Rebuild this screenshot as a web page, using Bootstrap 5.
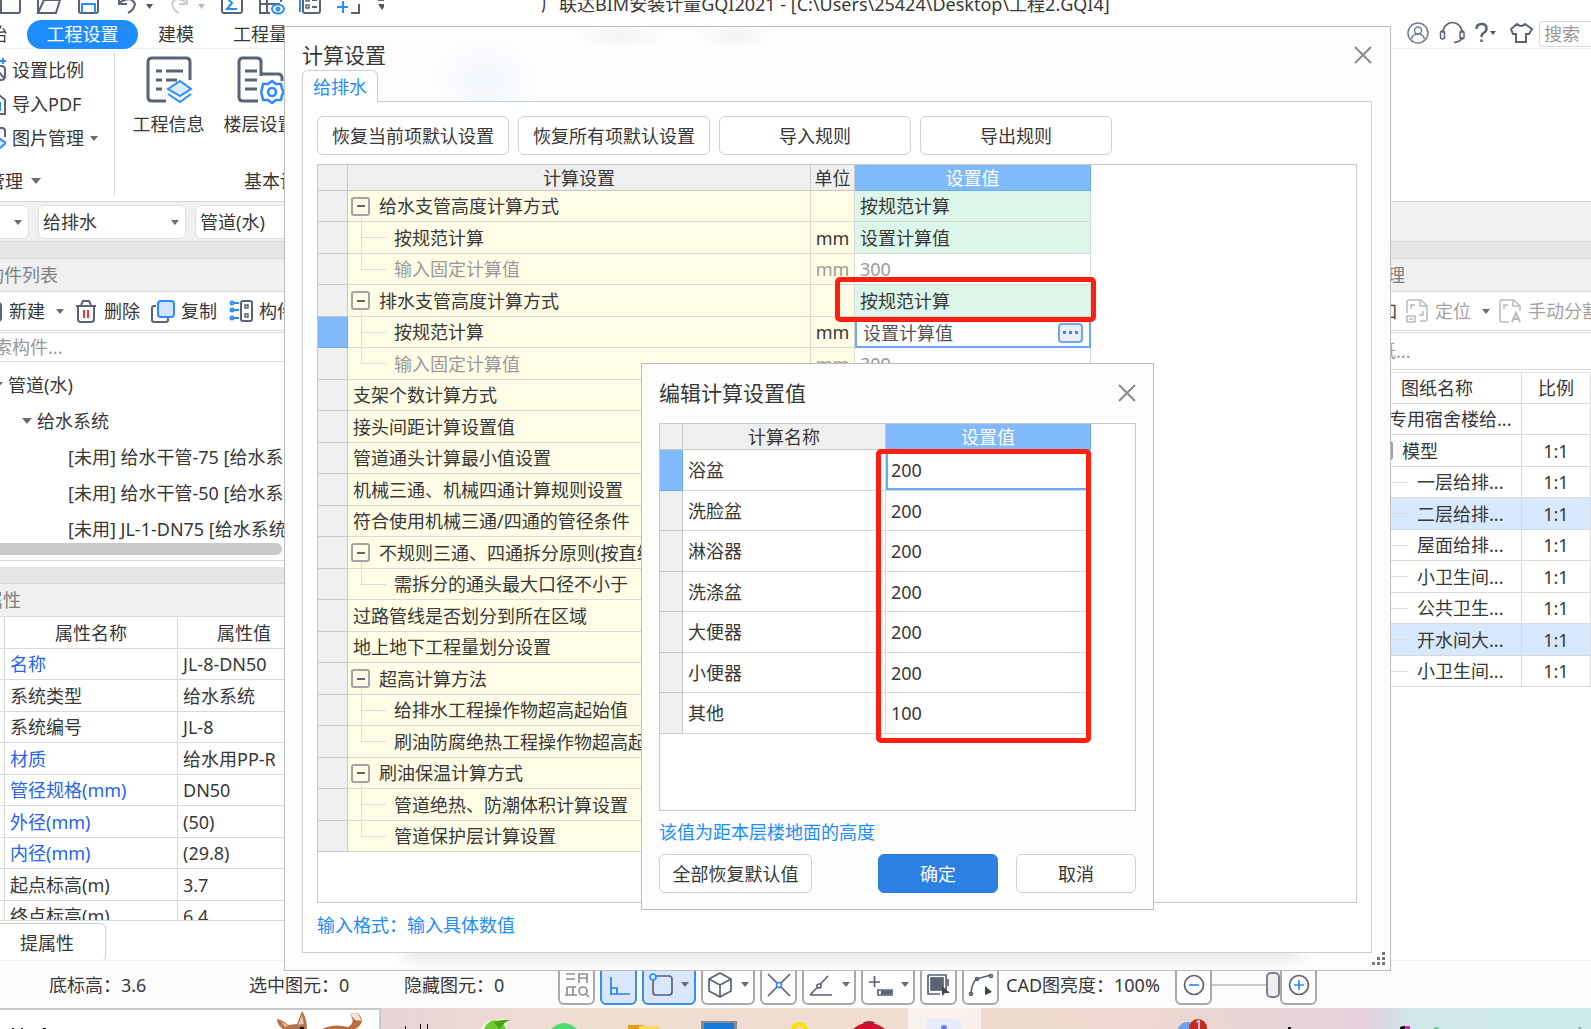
<!DOCTYPE html>
<html lang="zh-CN">
<head>
<meta charset="utf-8">
<meta name="viewport" content="width=device-width, initial-scale=1">
<title>广联达BIM安装计量GQI2021</title>
<link href="https://cdn.jsdelivr.net/npm/bootstrap@5.3.0/dist/css/bootstrap.min.css" rel="stylesheet">
<style>
:root{--ink:#383838;--rule:#d9d9d9;--accent:#1e8cff;--head:#f0f0f0}
body{font-family:"Noto Sans","Noto Sans CJK SC",sans-serif;font-size:18px;line-height:24px;color:var(--ink);background:#fff;overflow:hidden;height:100vh}
svg{display:block;flex:none;fill:none;stroke:#5a6275;stroke-width:2}
table{border-collapse:separate;border-spacing:0;table-layout:fixed}
button{color:inherit}
.shell{margin:-12px 0 0 -32px;height:calc(100vh + 12px);white-space:nowrap}
.shell>*{flex-shrink:0}
.shell>main{flex:1 1 0;min-height:0}
.caret{width:0;height:0;border:5px solid transparent;border-top:6px solid #6d6d6d;border-bottom:0;flex:none}
.caret-s{border-width:4px;border-top-width:5px;border-bottom:0}
.plain{background:none;border:0;padding:0;white-space:nowrap}
/* title and tabs */
.titlebar{height:32px;padding-left:32px}
.apptitle{padding-left:157px}
.tabs{height:29px;border-bottom:1px solid #eee}
.tabs a{color:var(--ink);text-decoration:none}
.tabs .on{background:var(--accent);color:#fff;border-radius:15px;width:111px;height:29px;text-align:center;line-height:28px}
.tabs .find{width:52px;height:26px;border:1px solid var(--rule);border-right:0;border-radius:4px 0 0 4px;padding:0 4px;outline:0;color:#999}
.find::placeholder,.seek::placeholder{color:#999;opacity:1}
/* ribbon */
.ribbon{height:152px}
.smalls{width:147px;border-right:1px solid var(--rule);margin:4px 0 6px}
.smalls .tool{height:34px;gap:6px;padding-left:16px}
.bigs .tool{width:91px}
.strip{height:41px;background:#f1f1f1;border-top:1px solid var(--rule);border-bottom:1px solid var(--rule);gap:9px;padding:3px 0}
.strip .form-select{width:148px;height:34px;padding:0 4px;font-size:18px;line-height:24px;border:1px solid #e0e0e0;border-radius:6px;color:var(--ink);background-image:linear-gradient(#0000,#0000)}
.pick{position:relative}
.pick .caret{position:absolute;right:7px;top:15px}
.band{height:16px;background:#e6e6e6}
.panelhead{height:34px;background:var(--head);border-top:1px solid var(--rule);border-bottom:1px solid var(--rule);color:#808080}
.bar{height:41px;border-bottom:3px double var(--rule)}
.bar .dim{color:#a3a3a3;gap:7px;margin-left:9px}
.bar .dim svg{stroke:#bbb;stroke-width:1.5}
.seek{height:29px;border:0;border-bottom:1px solid var(--rule);outline:0;padding:0 0 0 8px}
/* left dock */
.dock-l{width:372px}
.tree{height:181px;padding-top:5px;overflow:hidden}
.tree li{height:36px;display:flex;align-items:center;gap:5px}
.thumb{height:12px;width:314px;background:#c9c9c9;border-radius:6px;margin-bottom:5px;flex:none}
.gapline{height:7px;border-top:1px solid var(--rule);flex:none}
.clip{overflow:hidden;min-height:0}
.props td,.props th,.sheets td,.sheets th{border-right:1px solid var(--rule);border-bottom:1px solid var(--rule);padding:0 5px;font-weight:400;height:31px}
.props thead th,.props tr:nth-child(even) td{height:32px}
.props th,.sheets th{text-align:center}
.props .key{color:#2563f5}
.dockfoot{height:40px;border-top:1px solid var(--rule);padding-top:2px;flex:none}
.btn-line{border:1px solid #cfcfcf;border-radius:6px;background:#fff;padding:0;height:39px;white-space:nowrap;font-size:18px;line-height:24px;color:var(--ink)}
.btn-line:hover{background:#f6f9ff}
/* right dock */
.dock-r{width:271px}
.sheets tr>:nth-child(2){text-align:center;padding:0}
.sheets tr:nth-child(even) td{height:32px}
.sheets td.kid{padding-left:97px;background:linear-gradient(#ddd,#ddd) 71px 50%/17px 1px no-repeat}
.sheets .pick-row td{background-color:#d6e9ff}
/* dialogs */
.dlg{position:absolute;background-color:#fdfdfd;border:1px solid #bcbcbc}
.dlg h2{font-size:21px;line-height:28px;margin:0;font-weight:400}
.dlg-main{left:284px;right:200px;top:26px;bottom:58px;padding:0 18px 17px 17px;
 background-image:radial-gradient(ellipse 56px 44px at 200px 52px,#f1f5fd,#0000),radial-gradient(ellipse 50px 14px at 335px 8px,#f3f3f3,#0000),radial-gradient(ellipse 40px 14px at 450px 8px,#f3f3f3,#0000),linear-gradient(#fdfdfd00,#fdfdfd),linear-gradient(90deg,#0000 108px,#e9e9e9 134px,#e9e9e9 1000px,#0000 1028px);
 background-size:auto,auto,auto,100% 18px,100% 18px;background-position:0 0,0 0,0 0,0 100%,0 100%;background-repeat:no-repeat}
.dlg-main header{height:43px;padding-top:12px}
.dlg-main header svg,.dlg-sub header svg{stroke:#8b8b8b}
.leaf{height:32px;width:76px;border:1px solid #c9d0d6;border-bottom:0;border-radius:6px 6px 0 0;background:#fff;color:var(--accent);margin-bottom:-1px;position:relative;text-align:center;line-height:32px;padding:0}
.sheetbox{border:1px solid #c9d0d6;background:#fff;padding:14px 14px 15px;min-height:0}
.gridbox{border:1px solid #c8c8c8;background:#fff;min-height:0}
.w192{width:192px}
.calc{width:773px}
.calc th,.calc td{border-right:1px solid var(--rule);border-bottom:1px solid var(--rule);padding:0 5px;height:31px;line-height:24px;font-weight:400;white-space:nowrap;overflow:hidden}
.calc th{background:#efefef;height:26px;text-align:center;padding:0;border-color:#c8c8c8}
.calc tbody tr:nth-child(even) td{height:32px}
.calc tbody td:nth-child(1),.vals tbody td:nth-child(1){background:#efefef;border-color:#c8c8c8}
.calc tbody td:nth-child(2),.calc tbody td:nth-child(3){background-color:#fffde5}
.calc tbody td:nth-child(3){text-align:center;padding:0}
.calc .mint{background:#ddf6ea}
.calc th.hot,.vals th.hot,.calc tbody td.hot,.vals tbody td.hot{background:#80bafa;border-color:#6aaaf0;color:#fff}
.calc .off{color:#9a9a9a}
.calc td.sub,.calc td.end{padding-left:46px;background:linear-gradient(#dedede,#dedede) 13px 0/1px 100% no-repeat,linear-gradient(#dedede,#dedede) 13px 50%/25px 1px no-repeat}
.calc td.end{background-size:1px 50%,25px 1px}
.calc td.top{padding-left:3px;background:linear-gradient(#dedede,#dedede) 13px 100%/1px 6px no-repeat}
.node{display:flex;align-items:center;gap:9px}
.fold{width:19px;height:19px;border:2px solid #a3a3a3;border-radius:3px;background:none;padding:0;flex:none;display:flex;align-items:center;justify-content:center}
.fold::after{content:"";width:8px;height:2px;background:#666}
.calc td.anchor{position:relative;overflow:visible}
.mark-red{position:absolute;border:5px solid #ff1f10;border-radius:5px;z-index:2;pointer-events:none}
.mark-a{inset:-8px -6px -6px -20px}
.mark-b{top:25px;right:0;bottom:-9px;width:215px}
.calc td.edit{padding:0;border:0;height:31px}
.editor{height:31px;border:2px solid #6aaaee;padding:0 6px}
.editor input{border:0;outline:0;padding:0;width:100%;min-width:0;color:#555;background:none}
.more{width:25px;height:20px;border:2px solid #6aaaee;border-radius:4px;background:#eceef8;padding:0;gap:3px;flex:none}
.more i{width:3px;height:3px;background:#2b8cff}
.hint{color:var(--accent)}
.dlg-sub{left:641px;top:363px;width:513px;padding:0 17px 16px}
.dlg-sub header{height:59px;padding-bottom:2px}
.dlg-sub .gridbox{height:388px}
.vals{width:431px}
.vals th,.vals td{border-right:1px solid var(--rule);border-bottom:1px solid var(--rule);padding:0 5px;height:41px;font-weight:400}
.vals th{height:26px;background:#efefef;text-align:center;border-color:#c8c8c8}
.vals tr:nth-child(even) td{height:40px}
.vals tbody tr:first-child td:last-child{box-shadow:inset 0 0 0 2px #6aaaee}
.btn-ok{background:#2c80e2;border-color:#2c80e2;color:#fff}
.w120{width:120px}.w153{width:153px}
.grip{position:absolute;right:4px;bottom:4px}
/* status and task bar */
.status{height:48px;background:#fcfcfc;padding-left:81px;border-top:1px solid #f0f0f0}
.status svg{stroke-width:1.7}
.status .btns{gap:5px}
.tbtn{height:40px;width:37px;border:2px solid #a9a9a9;border-radius:6px;background:#fff;padding:0;display:flex;align-items:center;justify-content:center;gap:8px}
.tbtn.wide{width:54px}
.tbtn.act{background:#d8e7fb;border-color:#3a8df0}
.range{appearance:none;width:68px;height:26px;background:linear-gradient(#c9c9c9,#c9c9c9) 0 50%/100% 2px no-repeat;margin:0}
.range::-webkit-slider-thumb{appearance:none;width:14px;height:26px;border:2px solid #7a7f8c;border-radius:5px;background:#f0f0f0}
.task{height:21px;background:linear-gradient(90deg,#e8d2d8 400px,#efdcd2 560px,#f0dccf 900px,#eed8d0 1180px,#e5d2da 1360px,#e3d0dc 1400px,#cfe6ea 1440px,#cbeaec)}
.taskfind{width:413px;background:#fff;border:2px solid #c8c8c8;border-left:0;border-bottom:0}
</style>
</head>
<body>
<div class="shell d-flex flex-column">
  <div class="titlebar d-flex align-items-center">
    <svg width="384" height="24" viewBox="0 0 384 24">
      <path d="M1 3v18h17q2 0 2-2V3"/>
      <path d="M38 21l6-13h16l-4 13zM38 21V5h12"/>
      <path d="M79 3v16q0 2 2 2h15q2 0 2-2V3"/><path d="M82 21v-9h13v9" stroke="#2b8cff"/>
      <path d="M119 4v8h8M119 11q12-8 16 1-1 6-7 9"/><path d="M146 12h7l-3.500 5z" fill="#555" stroke="none"/>
      <path d="M187 4v8h-8M187 11q-12-8-15 1 1 6 7 9" stroke="#ccc"/><path d="M198 12h7l-3.500 5z" fill="#bbb" stroke="none"/>
      <path d="M222 3v16q0 2 2 2h16q2 0 2-2V3"/><path d="M236 6h-9l5 5-5 6h10" stroke="#2b8cff"/>
      <path d="M281 10V3M260 3v18h10M260 12h20M267 3v18"/><ellipse cx="278" cy="17" rx="6" ry="4.500" stroke="#2b8cff"/><circle cx="278" cy="17" r="1.500" stroke="#2b8cff"/>
      <path d="M300 3v17" stroke="#2b8cff"/><path d="M303 3v16q0 2 2 2h13q2 0 2-2V3M312 8h5M312 15h5"/><path d="M306 6h3v3h-3zM306 13h3v3h-3z" stroke-width="1.500"/>
      <path d="M343 9v12M337 15h11" stroke="#2b8cff"/><path d="M351 21h8v-9M338 3v4"/>
      <path d="M378 8h8" /><path d="M378 12h8l-4 6z" fill="#555" stroke="none"/>
    </svg>
    <div class="apptitle">广联达BIM安装计量GQI2021 - [C:\Users\25424\Desktop\工程2.GQI4]</div>
  </div>
  <nav class="tabs d-flex align-items-center">
    <a href="#" style="margin-left:3px">开始</a>
    <a href="#" class="on" style="margin-left:20px">工程设置</a>
    <a href="#" style="margin-left:20px">建模</a>
    <a href="#" style="margin-left:39px">工程量</a>
    <div class="ms-auto d-flex align-items-center">
      <svg width="132" height="26" viewBox="0 0 132 26">
        <g stroke="#747c8e" stroke-width="1.500"><circle cx="11" cy="12" r="10"/><circle cx="11" cy="9.500" r="3.500"/><path d="M4.500 18q1-5 6.500-5t6.500 5"/></g>
        <path d="M36 12v-1a9.500 9.500 0 0 1 19 0v1M55 16q-1 5-8 5.500" stroke-width="1.700"/><rect x="33.500" y="10" width="4" height="8" rx="2" stroke-width="1.500"/><rect x="53" y="10" width="4" height="8" rx="2" stroke-width="1.500"/>
        <path d="M69.500 8q0-5 5-5t5 4.500q0 3-3 4.500-2 1-2 4M74.500 18.500v2.500" stroke-width="2.500"/><path d="M83 10h6l-3 4z" fill="#555" stroke="none"/>
        <path d="M110 3q4 4 8 0l7 5-3 5h-3v8h-10v-8h-3l-2-5z" stroke-width="2"/>
      </svg>
      <input class="find" type="text" placeholder="搜索" aria-label="搜索">
    </div>
  </nav>
  <div class="ribbon d-flex">
    <div class="smalls d-flex flex-column">
      <button class="plain tool d-flex align-items-center"><svg width="22" height="24" viewBox="0 0 22 24"><path d="M4 8h13q4 0 4 4v6q0 4-4 4H4M8 20l6-7 6 7"/><path d="M14 2h2M19 0v6M16 3h6" stroke="#2b8cff"/></svg>设置比例</button>
      <button class="plain tool d-flex align-items-center"><svg width="22" height="24" viewBox="0 0 22 24"><path d="M2 8V2h12l7 6v14H2"/><path d="M10 12h7M16 10v9" stroke="#2b8cff"/></svg>导入PDF</button>
      <button class="plain tool d-flex align-items-center"><svg width="22" height="24" viewBox="0 0 22 24"><path d="M2 2h16q3 0 3 3v6M2 20V2"/><path d="M10 17l6-4 6 4-6 5z" stroke="#2b8cff" fill="#d8e8ff"/></svg>图片管理<span class="caret caret-s"></span></button>
      <div class="d-flex align-items-center mt-auto gap-2" style="padding-left:19px;margin-bottom:2px">管理<span class="caret"></span></div>
    </div>
    <div class="bigs d-flex flex-column flex-grow-1">
      <div class="d-flex" style="padding:7px 0 0 8px">
        <button class="plain tool d-flex flex-column align-items-center gap-2">
          <svg width="48" height="48" viewBox="0 0 48 48"><g stroke-width="3"><path d="M45 24V6q0-4-4-4H7Q3 2 3 6v35q0 4 4 4h14"/><path d="M11 15h6M21 15h17M11 24h6M21 24h11M11 33h6"/></g><path d="M23 33l12-8 11 8-11 7z" fill="#dcebfd" stroke="#2b8cff"/><path d="M23 38l12 8 11-8" stroke="#2b8cff"/></svg>
          <span>工程信息</span></button>
        <button class="plain tool d-flex flex-column align-items-center gap-2">
          <svg width="48" height="48" viewBox="0 0 48 48"><g stroke-width="3"><path d="M22 45H7q-4 0-4-4V6q0-4 4-4h14q4 0 4 4v14M25 18h17q4 0 4 4v3M9 15h12M9 24h12M9 33h12"/></g><g stroke="#2b8cff" stroke-width="2.500"><path d="M36 25l4 3 5 0 1 5 2 3-2 3-1 5-5 0-4 3-4-3-5 0-1-5-1-3 1-3 1-5 5 0z"/><circle cx="36" cy="36" r="4"/></g></svg>
          <span>楼层设置</span></button>
      </div>
      <div class="mt-auto mb-2" style="padding-left:129px">基本设置</div>
    </div>
  </div>
  <div class="strip d-flex">
    <div class="pick" style="margin-left:-87px"><select class="form-select" aria-label="楼层"><option></option></select><span class="caret caret-s"></span></div>
    <div class="pick"><select class="form-select" aria-label="专业"><option>给排水</option></select><span class="caret caret-s"></span></div>
    <div class="pick"><select class="form-select" aria-label="构件类型"><option>管道(水)</option></select><span class="caret caret-s"></span></div>
  </div>
  <div class="band"></div>
  <main class="d-flex justify-content-between">
    <section class="dock-l d-flex flex-column">
      <div class="panelhead d-flex align-items-center flex-shrink-0" style="padding-left:18px">构件列表</div>
      <div class="bar d-flex align-items-center flex-shrink-0">
        <button class="plain d-flex align-items-center" style="gap:7px;margin-left:12px"><svg width="22" height="24" viewBox="0 0 22 24"><path d="M2 4h16q3 0 3 3v12q0 3-3 3H2"/></svg>新建<span class="caret caret-s ms-1"></span></button>
        <button class="plain d-flex align-items-center" style="gap:7px;margin-left:11px"><svg width="22" height="24" viewBox="0 0 22 24"><path d="M1 7h20M3 7v13q0 3 3 3h10q3 0 3-3V7M6 6l2-4h6l2 4"/><path d="M9 11v8M13 11v8" stroke="#e33"/></svg>删除</button>
        <button class="plain d-flex align-items-center" style="gap:6px;margin-left:11px"><svg width="24" height="24" viewBox="0 0 24 24"><path d="M5 7H3Q1 7 1 9v12q0 2 2 2h12q2 0 2-2v-2"/><rect x="7" y="2" width="16" height="16" rx="3" stroke="#2b8cff" fill="#d3e3fb"/></svg>复制</button>
        <button class="plain d-flex align-items-center" style="gap:6px;margin-left:12px"><svg width="24" height="24" viewBox="0 0 24 24"><rect x="12" y="2" width="11" height="20" rx="2"/><path d="M16 6h3v3h-3zM16 15h3v3h-3z" stroke-width="1.500"/><g stroke="#2b8cff"><path d="M5 4h5M5 11h5M5 19h5"/><circle cx="3" cy="4" r="1.500"/><circle cx="3" cy="11" r="1.500"/><circle cx="3" cy="19" r="1.500"/></g></svg>构件库</button>
      </div>
      <input class="seek flex-shrink-0" type="text" placeholder="搜索构件..." aria-label="搜索构件">
      <ul class="tree list-unstyled m-0 flex-shrink-0">
        <li style="padding-left:25px"><span class="caret"></span>管道(水)</li>
        <li style="padding-left:54px"><span class="caret"></span>给水系统</li>
        <li style="padding-left:100px">[未用] 给水干管-75 [给水系统]</li>
        <li style="padding-left:100px">[未用] 给水干管-50 [给水系统]</li>
        <li style="padding-left:100px">[未用] JL-1-DN75 [给水系统]</li>
      </ul>
      <div class="thumb"></div>
      <div class="gapline"></div>
      <div class="band flex-shrink-0"></div>
      <div class="panelhead d-flex align-items-center flex-shrink-0" style="padding-left:17px">属性</div>
      <div class="clip flex-grow-1">
        <table class="props">
          <colgroup><col style="width:37px"><col style="width:173px"><col style="width:133px"></colgroup>
          <thead><tr><th></th><th>属性名称</th><th>属性值</th></tr></thead>
          <tbody>
          <tr><td></td><td class="key">名称</td><td>JL-8-DN50</td></tr>
          <tr><td></td><td>系统类型</td><td>给水系统</td></tr>
          <tr><td></td><td>系统编号</td><td>JL-8</td></tr>
          <tr><td></td><td class="key">材质</td><td>给水用PP-R</td></tr>
          <tr><td></td><td class="key">管径规格(mm)</td><td>DN50</td></tr>
          <tr><td></td><td class="key">外径(mm)</td><td>(50)</td></tr>
          <tr><td></td><td class="key">内径(mm)</td><td>(29.8)</td></tr>
          <tr><td></td><td>起点标高(m)</td><td>3.7</td></tr>
          <tr><td></td><td>终点标高(m)</td><td>6.4</td></tr>
          </tbody>
        </table>
      </div>
      <div class="dockfoot"><button class="btn-line" style="width:118px;margin-left:20px">提属性</button></div>
    </section>
    <section class="dock-r d-flex flex-column">
      <div class="panelhead d-flex align-items-center flex-shrink-0" style="padding-left:13px">图纸管理</div>
      <div class="bar d-flex align-items-center flex-shrink-0" style="padding-left:41px">
        <button class="plain">添加</button>
        <button class="plain dim d-flex align-items-center"><svg width="22" height="24" viewBox="0 0 22 24"><path d="M1 14V3q0-2 2-2h12l6 6v13q0 2-2 2h-5M14 1v6h7M5 10V6h4M17 12v4h-4M1 17h8v6H1zM3 20h4"/></svg>定位<span class="caret caret-s ms-1"></span></button>
        <button class="plain dim d-flex align-items-center"><svg width="22" height="24" viewBox="0 0 22 24"><path d="M10 23H3q-2 0-2-2V3q0-2 2-2h12l6 6v5M14 1v6h7M5 10V6h4"/><path d="M13 23l4-9 4 9M14 20h6" stroke-width="2"/></svg>手动分割</button>
      </div>
      <input class="seek flex-shrink-0" style="height:37px;padding-left:4px" type="text" placeholder="搜索图纸..." aria-label="搜索图纸">
      <div style="height:2px"></div>
      <table class="sheets border-top">
        <colgroup><col style="width:203px"><col style="width:78px"></colgroup>
        <thead><tr><th style="padding-left:38px">图纸名称</th><th>比例</th></tr></thead>
        <tbody>
        <tr><td style="padding-left:69px">专用宿舍楼给...</td><td></td></tr>
        <tr><td style="padding-left:54px"><div class="node"><button class="fold" aria-label="折叠"></button>模型</div></td><td>1:1</td></tr>
        <tr><td class="kid">一层给排...</td><td>1:1</td></tr>
        <tr class="pick-row"><td class="kid">二层给排...</td><td>1:1</td></tr>
        <tr><td class="kid">屋面给排...</td><td>1:1</td></tr>
        <tr><td class="kid">小卫生间...</td><td>1:1</td></tr>
        <tr><td class="kid">公共卫生...</td><td>1:1</td></tr>
        <tr class="pick-row"><td class="kid">开水间大...</td><td>1:1</td></tr>
        <tr><td class="kid">小卫生间...</td><td>1:1</td></tr>
        </tbody>
      </table>
    </section>
  </main>
  <footer class="status d-flex align-items-center">
    <span style="width:200px">底标高：3.6</span><span style="width:155px">选中图元：0</span><span style="width:154px">隐藏图元：0</span>
    <div class="btns d-flex">
      <button class="tbtn" aria-label="查找"><svg width="26" height="28" viewBox="0 0 26 28" style="stroke:#8f8f8f"><path d="M2 3h9M2 8h9M15 12V3h8v9M15 7h8M3 16v8M3 16h9M9 16v8M1 24h12"/><circle cx="19" cy="20" r="4"/><path d="M22 23l3 3"/></svg></button>
      <button class="tbtn act" aria-label="正交"><svg width="24" height="26" viewBox="0 0 24 26" style="stroke:#2b7de8"><path d="M4 5v17h19M4 16h6v6"/></svg></button>
      <button class="tbtn wide act" aria-label="捕捉"><svg width="24" height="26" viewBox="0 0 24 26"><rect x="4" y="4" width="19" height="19" rx="3"/><circle cx="4" cy="5" r="3" stroke="#2b8cff" fill="#d8e7fb"/></svg><span class="caret caret-s"></span></button>
      <button class="tbtn wide" aria-label="三维"><svg width="26" height="28" viewBox="0 0 26 28"><path d="M13 2l11 6v12l-11 6-11-6V8zM2 8l11 6 11-6M13 14v12"/></svg><span class="caret caret-s"></span></button>
      <button class="tbtn" aria-label="交点"><svg width="26" height="26" viewBox="0 0 26 26"><path d="M2 2l22 22M24 2L2 24"/><circle cx="13" cy="13" r="2.500" stroke="#2b8cff" fill="#fff"/></svg></button>
      <button class="tbtn wide" aria-label="角度"><svg width="26" height="26" viewBox="0 0 26 26"><path d="M2 23h22M2 23L20 4"/><circle cx="11" cy="14" r="2" fill="#fff"/></svg><span class="caret caret-s"></span></button>
      <button class="tbtn wide" aria-label="输入"><svg width="26" height="26" viewBox="0 0 26 26"><path d="M2 10h11M7.500 4v11M11 18h14v5H11z"/><path d="M14 20.500h10" stroke-width="4"/></svg><span class="caret caret-s"></span></button>
      <button class="tbtn" aria-label="选择"><svg width="24" height="26" viewBox="0 0 24 26"><rect x="4" y="6" width="12" height="12" fill="#5a6275"/><path d="M1 3h18v18M1 3v19h12M21 7v7"/><path d="M15 14l8 7h-5l-3 3z" fill="#444" stroke="none"/></svg></button>
      <button class="tbtn" aria-label="折线"><svg width="26" height="26" viewBox="0 0 26 26"><path d="M3 22Q4 7 12 6l11-3"/><circle cx="3" cy="22" r="1.500"/><circle cx="9" cy="7" r="1.500"/><circle cx="23" cy="4" r="1.500"/><path d="M17 14l7 6-7 3z" fill="#444" stroke="none"/></svg></button>
    </div>
    <span style="width:169px;margin-left:7px">CAD图亮度：100%</span>
    <button class="tbtn" aria-label="降低亮度"><svg width="22" height="22" viewBox="0 0 22 22"><circle cx="11" cy="11" r="9.500"/><path d="M6 11h10" stroke="#2b8cff"/></svg></button>
    <input class="range" type="range" min="0" max="100" value="100" aria-label="CAD图亮度">
    <button class="tbtn" aria-label="提高亮度"><svg width="22" height="22" viewBox="0 0 22 22"><circle cx="11" cy="11" r="9.500"/><path d="M6 11h10M11 6v10" stroke="#2b8cff"/></svg></button>
  </footer>
  <div class="task d-flex">
    <div class="taskfind"><svg width="400" height="19" viewBox="-32 0 400 19" style="stroke:none">
      <path d="M12 18h2v1h-2zM21 18h2v1h-2zM43 18h3v1h-3z" fill="#111"/>
      <path d="M277 9q6 1 11 6l9-1 5-13q5 7 5 18h-24q-6-4-6-10z" fill="#b5734a"/><path d="M281 11l7 5-3 1zM302 5l2 9-6 1z" fill="#edc0a8"/><path d="M322 19q12-6 26-2 8-4 2-13 10-4 12 7-2 6-7 8z" fill="#bd6b3c"/><path d="M350 4q9-4 11 7l-6-1z" fill="#efe2d8"/><path d="M300 17h4v2h-4z" fill="#111"/></svg></div>
    <svg width="1200" height="21" viewBox="381 0 1200 21" style="stroke:none">
      <path d="M405 18h1v3h-1zM420 16h1v5h-1zM427 16h1v5h-1z" fill="#111"/>
      <path d="M480 21q8-12 28-10l-2 10z" fill="#eef7e6"/><path d="M484 21q5-11 16-8 4 3 6 8z" fill="#6fc82c"/><path d="M494 15q6-4 16-3-6 2-10 9" fill="#4aa31c"/>
      <path d="M551 21q13-12 26 0z" fill="#4fdc71"/>
      <path d="M628 21v-4h15l3 4z" fill="#e0a010"/><path d="M639 21v-3h20v3z" fill="#ffd75a"/>
      <path d="M701 13h36v8h-36z" fill="#8a8a8a"/><path d="M704 15h30v6h-30z" fill="#1479d8"/>
      <path d="M791 21q2-7 8-7t9 7h-4q-5-5-9 0z" fill="#f5e500"/>
      <path d="M853 21q15-13 32 0z" fill="#d1102e"/><path d="M862 15q8-4 14 0z" fill="#6b3b36"/>
      <path d="M908 0h73v21h-73z" fill="#fff" opacity=".6"/><rect x="926" y="11" width="36" height="14" rx="5" fill="#e8ebff"/><circle cx="944" cy="20" r="3" fill="#6b7cf0"/>
      <circle cx="1188" cy="25" r="11" fill="#6fa0ee"/><circle cx="1198" cy="20" r="9" fill="#c42b1c"/>
      <text x="1195" y="21" font-size="13" fill="#fff">1</text>
      <path d="M1288 19h3v2h-3zM1400 19q6-3 8 2h-8zM1577 20l14-2v3z" fill="#111"/><path d="M1405 18h5v3h-5z" fill="#ff12c8"/><path d="M1433 21q3-4 7 0z" fill="#4fe07a"/>
    </svg>
  </div>
</div>

<section class="dlg dlg-main d-flex flex-column" role="dialog" aria-labelledby="t1">
  <header class="d-flex align-items-center justify-content-between flex-shrink-0">
    <h2 id="t1">计算设置</h2>
    <button class="plain" aria-label="关闭"><svg width="18" height="18" viewBox="0 0 18 18"><path d="M1 1l16 16M17 1L1 17"/></svg></button>
  </header>
  <button class="leaf flex-shrink-0">给排水</button>
  <div class="sheetbox flex-grow-1 d-flex flex-column">
    <div class="d-flex flex-shrink-0" style="gap:9px">
      <button class="btn-line w192">恢复当前项默认设置</button>
      <button class="btn-line w192">恢复所有项默认设置</button>
      <button class="btn-line w192">导入规则</button>
      <button class="btn-line w192">导出规则</button>
    </div>
    <div class="gridbox flex-grow-1" style="margin:9px 0 10px">
      <table class="calc">
        <colgroup><col style="width:30px"><col style="width:463px"><col style="width:44px"><col style="width:236px"></colgroup>
        <thead><tr><th></th><th>计算设置</th><th>单位</th><th class="hot">设置值</th></tr></thead>
        <tbody>
        <tr><td></td><td class="top"><div class="node"><button class="fold" aria-label="折叠"></button>给水支管高度计算方式</div></td><td></td><td class="mint">按规范计算</td></tr>
        <tr><td></td><td class="sub">按规范计算</td><td>mm</td><td class="mint">设置计算值</td></tr>
        <tr><td></td><td class="end off">输入固定计算值</td><td class="off">mm</td><td class="off">300</td></tr>
        <tr><td></td><td class="top"><div class="node"><button class="fold" aria-label="折叠"></button>排水支管高度计算方式</div></td><td></td><td class="mint anchor">按规范计算<div class="mark-red mark-a"></div></td></tr>
        <tr><td class="hot"></td><td class="sub">按规范计算</td><td>mm</td><td class="edit"><div class="editor d-flex align-items-center"><input type="text" value="设置计算值" aria-label="设置值"><button class="more d-flex align-items-center justify-content-center" aria-label="更多"><i></i><i></i><i></i></button></div></td></tr>
        <tr><td></td><td class="end off">输入固定计算值</td><td class="off">mm</td><td class="off">300</td></tr>
        <tr><td></td><td>支架个数计算方式</td><td></td><td></td></tr>
        <tr><td></td><td>接头间距计算设置值</td><td></td><td></td></tr>
        <tr><td></td><td>管道通头计算最小值设置</td><td></td><td></td></tr>
        <tr><td></td><td>机械三通、机械四通计算规则设置</td><td></td><td></td></tr>
        <tr><td></td><td>符合使用机械三通/四通的管径条件</td><td></td><td></td></tr>
        <tr><td></td><td class="top"><div class="node"><button class="fold" aria-label="折叠"></button>不规则三通、四通拆分原则(按直线)</div></td><td></td><td></td></tr>
        <tr><td></td><td class="end">需拆分的通头最大口径不小于</td><td></td><td></td></tr>
        <tr><td></td><td>过路管线是否划分到所在区域</td><td></td><td></td></tr>
        <tr><td></td><td>地上地下工程量划分设置</td><td></td><td></td></tr>
        <tr><td></td><td class="top"><div class="node"><button class="fold" aria-label="折叠"></button>超高计算方法</div></td><td></td><td></td></tr>
        <tr><td></td><td class="sub">给排水工程操作物超高起始值</td><td></td><td></td></tr>
        <tr><td></td><td class="end">刷油防腐绝热工程操作物超高起始值</td><td></td><td></td></tr>
        <tr><td></td><td class="top"><div class="node"><button class="fold" aria-label="折叠"></button>刷油保温计算方式</div></td><td></td><td></td></tr>
        <tr><td></td><td class="sub">管道绝热、防潮体积计算设置</td><td></td><td></td></tr>
        <tr><td></td><td class="end">管道保护层计算设置</td><td></td><td></td></tr>
        </tbody>
      </table>
    </div>
    <div class="hint flex-shrink-0">输入格式：输入具体数值</div>
  </div>
  <svg class="grip" width="14" height="14" viewBox="0 0 14 14" style="stroke:none;fill:#777"><path d="M10 0h3v3h-3zM5 5h3v3H5zM10 5h3v3h-3zM0 10h3v3H0zM5 10h3v3H5zM10 10h3v3h-3z"/></svg>
</section>

<section class="dlg dlg-sub" role="dialog" aria-labelledby="t2">
  <header class="d-flex align-items-center justify-content-between">
    <h2 id="t2">编辑计算设置值</h2>
    <button class="plain" aria-label="关闭"><svg width="18" height="18" viewBox="0 0 18 18"><path d="M1 1l16 16M17 1L1 17"/></svg></button>
  </header>
  <div class="gridbox">
    <div class="position-relative vals">
      <table class="vals">
        <colgroup><col style="width:23px"><col style="width:203px"><col style="width:205px"></colgroup>
        <thead><tr><th></th><th>计算名称</th><th class="hot">设置值</th></tr></thead>
        <tbody>
        <tr><td class="hot"></td><td>浴盆</td><td>200</td></tr>
        <tr><td></td><td>洗脸盆</td><td>200</td></tr>
        <tr><td></td><td>淋浴器</td><td>200</td></tr>
        <tr><td></td><td>洗涤盆</td><td>200</td></tr>
        <tr><td></td><td>大便器</td><td>200</td></tr>
        <tr><td></td><td>小便器</td><td>200</td></tr>
        <tr><td></td><td>其他</td><td>100</td></tr>
        </tbody>
      </table>
      <div class="mark-red mark-b"></div>
    </div>
  </div>
  <div class="hint" style="margin:9px 0 10px">该值为距本层楼地面的高度</div>
  <div class="d-flex">
    <button class="btn-line w153">全部恢复默认值</button>
    <button class="btn-line btn-ok w120 ms-auto">确定</button>
    <button class="btn-line w120" style="margin-left:18px">取消</button>
  </div>
</section>
<script src="https://cdn.jsdelivr.net/npm/bootstrap@5.3.0/dist/js/bootstrap.bundle.min.js"></script>
</body>
</html>
